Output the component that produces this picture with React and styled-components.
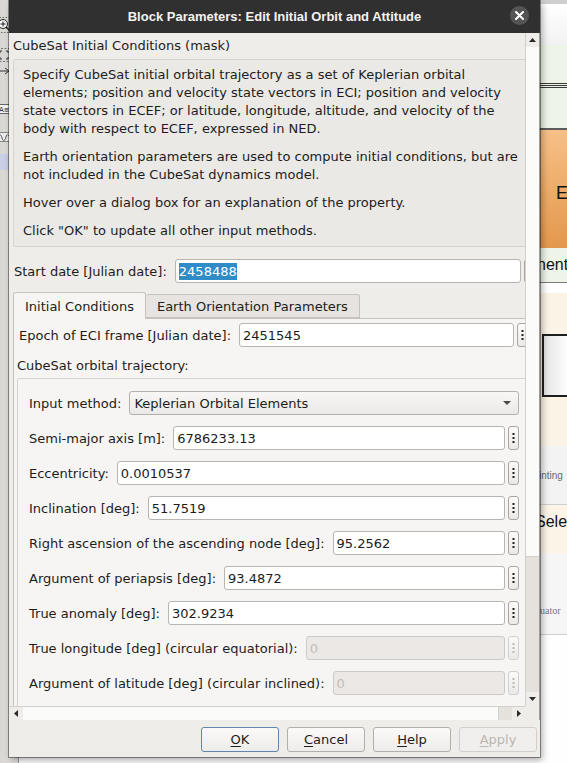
import React from "react";
import styled, { createGlobalStyle } from "styled-components";

const Global = createGlobalStyle`
  html, body { margin: 0; padding: 0; background: #ffffff; }
  body { width: 567px; height: 763px; overflow: hidden; }
  *, *::before, *::after { box-sizing: border-box; }
`;

const Screen = styled.div`
  position: relative;
  width: 567px;
  height: 763px;
  overflow: hidden;
  display: flex;
  font-family: "DejaVu Sans", "Liberation Sans", sans-serif;
  font-size: 13px;
  color: #1c1c1c;
`;

/* ---------- background application window ---------- */
const Toolbar = styled.div`
  flex: none;
  width: 19px;
  background: linear-gradient(90deg, #d9d7d4, #e4e2df);
  border-right: 1px solid #9c9995;
  display: flex;
  flex-direction: column;
  align-items: flex-start;
  padding-top: 17px;
`;

const ToolIcon = styled.div`
  margin-left: -4px;
  margin-top: ${(p) => p.$mt || 0}px;
  width: 16px;
  height: 16px;
  display: flex;
  align-items: center;
  justify-content: center;
  background: ${(p) => (p.$active ? "#c9cfe6" : "transparent")};
`;

const Canvas = styled.div`
  flex: 1;
  display: flex;
  flex-direction: column;
  font-family: "Liberation Sans", Arial, sans-serif;
`;

const Band = styled.div`
  flex: none;
  height: ${(p) => p.$h}px;
  background: ${(p) => p.$bg};
  border-bottom: ${(p) => (p.$line ? `1px solid ${p.$line}` : "none")};
  display: flex;
  align-items: ${(p) => p.$align || "center"};
  padding-left: ${(p) => p.$pl || 0}px;
  padding-top: ${(p) => p.$pt || 0}px;
  padding-bottom: ${(p) => p.$pb || 0}px;
  white-space: nowrap;
`;

const TripleLine = styled.div`
  width: 100%;
  height: 5px;
  margin-top: 38px;
  border-top: 1px solid #3a3a3a;
  border-bottom: 1px solid #3a3a3a;
  background: linear-gradient(#eef4e7 0 1px, #3a3a3a 1px 2px, #eef4e7 2px);
`;

const CanvasText = styled.span`
  font-family: ${(p) => (p.$serif ? '"Liberation Serif", serif' : '"Liberation Sans", Arial, sans-serif')};
  font-size: ${(p) => p.$size}px;
  color: ${(p) => p.$color || "#111"};
`;

const BlockBox = styled.div`
  margin-left: 523px;
  margin-top: 41px;
  width: 60px;
  height: 63px;
  border: 2px solid #1e1e1e;
  background: linear-gradient(90deg, #e4e4e4, #ffffff 45%);
`;

/* ---------- dialog ---------- */
const Dialog = styled.div`
  position: absolute;
  left: 9px;
  top: 0;
  width: 531px;
  height: 757px;
  display: flex;
  flex-direction: column;
  background: #efedea;
  box-shadow: 0 0 0 1px rgba(0, 0, 0, 0.38), 2px 3px 7px rgba(0, 0, 0, 0.35);
`;

const TitleBar = styled.div`
  flex: none;
  height: 33px;
  background: #303030;
  display: grid;
  grid-template-columns: 40px 1fr 40px;
  align-items: center;
`;

const Title = styled.div`
  grid-column: 2;
  text-align: center;
  color: #f3f3f3;
  font-family: "Liberation Sans", Arial, sans-serif;
  font-weight: bold;
  font-size: 13px;
`;

const CloseButton = styled.div`
  grid-column: 3;
  justify-self: end;
  margin-right: 11px;
  margin-top: -2px;
  width: 19px;
  height: 19px;
  border-radius: 50%;
  background: #545454;
  display: flex;
  align-items: center;
  justify-content: center;
`;

const Body = styled.div`
  flex: none;
  display: grid;
  grid-template-columns: 516px 15px;
  grid-template-rows: 673px 14px;
`;

const Viewport = styled.div`
  overflow: hidden;
  background: #efedea;
`;

const Content = styled.div`
  width: 530px;
  padding: 5px 4px 0;
`;

const MaskTitle = styled.div`
  height: 16px;
  line-height: 16px;
`;

const Description = styled.div`
  margin-top: 5px;
  border: 1px solid #d6d2ce;
  border-radius: 2px;
  background: #ebe9e6;
  padding: 6px 7px 6px 9px;
  line-height: 18px;
`;

const Para = styled.p`
  margin: 0;
  & + & { margin-top: 10px; }
`;

const Row = styled.div`
  display: flex;
  align-items: center;
  height: 24px;
  gap: 3px;
  margin-top: ${(p) => p.$mt || 0}px;
  padding-left: ${(p) => p.$pl || 0}px;
  margin-right: ${(p) => p.$mr || 0}px;
`;

const Label = styled.span`
  white-space: nowrap;
  margin-right: 5px;
`;

const Field = styled.div`
  flex: 1;
  height: 24px;
  border: 1px solid ${(p) => (p.$disabled ? "#cdc9c5" : "#b8b4b0")};
  border-radius: 3px;
  background: ${(p) => (p.$disabled ? "#ebe8e5" : "#ffffff")};
  color: ${(p) => (p.$disabled ? "#c2beba" : "#1c1c1c")};
  display: flex;
  align-items: center;
  padding-left: 3px;
  white-space: nowrap;
  overflow: hidden;
`;

const Selected = styled.span`
  background: #308cc6;
  color: #ffffff;
  line-height: 17px;
`;

const MoreButton = styled.div`
  flex: none;
  width: 11px;
  height: 24px;
  border: 1px solid ${(p) => (p.$disabled ? "#d3cfcb" : "#a9a5a1")};
  border-radius: 3px;
  background: linear-gradient(#fbfbfa, #ebe9e7);
  display: flex;
  align-items: center;
  justify-content: center;
`;

const Tabs = styled.div`
  margin-top: 9px;
  display: flex;
  align-items: flex-end;
  height: 26px;
`;

const Tab = styled.div`
  height: ${(p) => (p.$active ? 27 : 24)}px;
  margin-bottom: ${(p) => (p.$active ? -1 : 0)}px;
  padding: 0 11px;
  display: flex;
  align-items: center;
  border: 1px solid #c6c2be;
  border-bottom: ${(p) => (p.$active ? "none" : "1px solid #c6c2be")};
  border-left: ${(p) => (p.$first ? "1px solid #c6c2be" : "none")};
  border-radius: 3px 3px 0 0;
  background: ${(p) => (p.$active ? "#f7f5f3" : "#e6e3e0")};
  position: relative;
  z-index: ${(p) => (p.$active ? 1 : 0)};
  padding-top: ${(p) => (p.$active ? 0 : 1)}px;
`;

const TabPanel = styled.div`
  border: 1px solid #c6c2be;
  background: #f7f5f3;
  padding: 4px 3px 0 3px;
  height: 400px;
`;

const SectionLabel = styled.div`
  margin-top: 11px;
  height: 16px;
  line-height: 16px;
`;

const Group = styled.div`
  margin-top: 4px;
  border: 1px solid #d6d2ce;
  border-radius: 2px;
  background: #f7f5f3;
  padding: 12px 11px 14px;
  display: flex;
  flex-direction: column;
  gap: 11px;
`;

const Combo = styled.div`
  flex: 1;
  height: 24px;
  border: 1px solid #b4b0ac;
  border-radius: 3px;
  background: linear-gradient(#f8f7f6, #ebe9e7);
  display: flex;
  align-items: center;
  justify-content: space-between;
  padding: 0 7px 0 4px;
`;

const VScroll = styled.div`
  border-left: 1px solid #d3cfcb;
  border-right: 1px solid #9f9b97;
  background: #e5e2de;
  display: flex;
  flex-direction: column;
`;

const ArrowCell = styled.div`
  flex: none;
  width: ${(p) => (p.$w ? `${p.$w}px` : "auto")};
  height: ${(p) => (p.$h ? `${p.$h}px` : "auto")};
  display: flex;
  align-items: center;
  justify-content: center;
  background: #efedea;
`;

const Handle = styled.div`
  flex: none;
  ${(p) => (p.$vertical ? `height: ${p.$size}px;` : `width: ${p.$size}px;`)}
  background: #fbfbfa;
  ${(p) => (p.$vertical ? "border-bottom: 1px solid #d3cfcb;" : "border-right: 1px solid #d3cfcb;")}
`;

const Track = styled.div`
  flex: 1;
  background: #e5e2de;
`;

const HScroll = styled.div`
  border-top: 1px solid #d3cfcb;
  background: #e5e2de;
  display: flex;
`;

const Corner = styled.div`
  background: #efedea;
  border-right: 1px solid #9f9b97;
`;

const ButtonBar = styled.div`
  flex: 1;
  display: flex;
  justify-content: flex-end;
  align-items: flex-start;
  gap: 8px;
  padding: 7px 3px 0 0;
`;

const Button = styled.div`
  width: 78px;
  height: 25px;
  border: 1px solid ${(p) => (p.$default ? "#5f86ab" : p.$disabled ? "#d2cecb" : "#b3afab")};
  border-radius: 3px;
  background: ${(p) => (p.$disabled ? "#f1efed" : "linear-gradient(#fbfaf9, #eeecea)")};
  color: ${(p) => (p.$disabled ? "#bab6b2" : "#1c1c1c")};
  display: flex;
  align-items: center;
  justify-content: center;
  u { text-decoration-thickness: 1px; text-underline-offset: 2px; }
`;

const Dots = ({ disabled }) => (
  <svg width="3" height="12" viewBox="0 0 3 12">
    {[1, 5, 9].map((y) => (
      <rect key={y} x="0.5" y={y} width="2" height="2" fill={disabled ? "#bdb9b5" : "#222"} />
    ))}
  </svg>
);

const Tri = ({ dir, color = "#333", w = 7, h = 4 }) => {
  const pts = {
    up: `0,${h} ${w / 2},0 ${w},${h}`,
    down: `0,0 ${w},0 ${w / 2},${h}`,
    left: `${h},0 ${h},${w} 0,${w / 2}`,
    right: `0,0 0,${w} ${h},${w / 2}`,
  }[dir];
  const horiz = dir === "left" || dir === "right";
  return (
    <svg width={horiz ? h : w} height={horiz ? w : h} viewBox={`0 0 ${horiz ? h : w} ${horiz ? w : h}`}>
      <polygon points={pts} fill={color} />
    </svg>
  );
};

const ParamRow = ({ label, value, disabled }) => (
  <Row>
    <Label>{label}</Label>
    <Field $disabled={disabled}>{value}</Field>
    <MoreButton $disabled={disabled}>
      <Dots disabled={disabled} />
    </MoreButton>
  </Row>
);

const params = [
  ["Semi-major axis [m]:", "6786233.13"],
  ["Eccentricity:", "0.0010537"],
  ["Inclination [deg]:", "51.7519"],
  ["Right ascension of the ascending node [deg]:", "95.2562"],
  ["Argument of periapsis [deg]:", "93.4872"],
  ["True anomaly [deg]:", "302.9234"],
  ["True longitude [deg] (circular equatorial):", "0", true],
  ["Argument of latitude [deg] (circular inclined):", "0", true],
];

export default function App() {
  return (
    <Screen>
      <Global />
      <Toolbar>
        <ToolIcon>
          <svg width="16" height="16" viewBox="0 0 16 16">
            <rect x="0.5" y="0.5" width="15" height="15" fill="none" stroke="#666" strokeDasharray="1.5 1.5" />
            <circle cx="7" cy="7" r="4.5" fill="#f5f5f5" stroke="#222" />
            <path d="M4.5 7h5M7 4.5v5" stroke="#222" />
            <path d="M10 10l4 4" stroke="#222" strokeWidth="1.6" />
          </svg>
        </ToolIcon>
        <ToolIcon $mt={14}>
          <svg width="16" height="16" viewBox="0 0 16 16">
            <rect x="1.5" y="1.5" width="13" height="13" fill="none" stroke="#777" strokeDasharray="2 1.5" />
            <path d="M4 6V4h2M12 6V4h-2M4 10v2h2M12 10v2h-2" stroke="#333" fill="none" />
          </svg>
        </ToolIcon>
        <ToolIcon $mt={0}>
          <svg width="16" height="16" viewBox="0 0 16 16">
            <path d="M1 8h11M9 5l4 3-4 3" stroke="#333" fill="none" />
          </svg>
        </ToolIcon>
        <ToolIcon $mt={22}>
          <svg width="16" height="16" viewBox="0 0 16 16">
            <rect x="1.5" y="3.5" width="13" height="9" fill="#f4f4f4" stroke="#666" />
            <text x="3" y="11" fontSize="7" fontFamily="DejaVu Sans" fill="#222">A≡</text>
          </svg>
        </ToolIcon>
        <ToolIcon $mt={12}>
          <svg width="16" height="16" viewBox="0 0 16 16">
            <rect x="1.5" y="3.5" width="13" height="9" fill="#ececec" stroke="#888" />
            <path d="M2 9c2-4 3-4 4 0s3 3 4-1 2-2 4 0" stroke="#555" fill="none" />
          </svg>
        </ToolIcon>
        <ToolIcon $mt={9} $active />
      </Toolbar>

      <Canvas>
        <Band $h={4} $bg="#cfcfcf" />
        <Band $h={41} $bg="linear-gradient(#ffffff, #f2f2f2)" />
        <Band $h={83} $bg="#eef4e7" $align="flex-start">
          <TripleLine />
        </Band>
        <Band $h={2} $bg="#5c5c5c" />
        <Band $h={118} $bg="linear-gradient(170deg, #fdd9b0 10%, #f3b77a 55%, #e19548)" $pl={537} $pt={8}>
          <CanvasText $size={18}>E</CanvasText>
        </Band>
        <Band $h={35} $bg="#eef5e8" $line="#7c7c7c" $pl={518}>
          <CanvasText $size={16}>nent</CanvasText>
        </Band>
        <Band $h={10} $bg="#ffffff" />
        <Band $h={153} $bg="#fbf4e6" $align="flex-start">
          <BlockBox />
        </Band>
        <Band $h={59} $bg="#f3f3f3" $line="#cfcfcf" $pl={520}>
          <CanvasText $size={10} $color="#6a6a6a">inting</CanvasText>
        </Band>
        <Band $h={48} $bg="#fcf5e7" $pl={516} $align="flex-start" $pt={8}>
          <CanvasText $size={16}>Sele</CanvasText>
        </Band>
        <Band $h={82} $bg="#f6f6f6" $line="#cfcfcf" $pl={521} $align="flex-end" $pb={18}>
          <CanvasText $size={10} $serif $color="#777">uator</CanvasText>
        </Band>
        <Band $h={140} $bg="#fefefe" />
      </Canvas>

      <Dialog>
        <TitleBar>
          <Title>Block Parameters: Edit Initial Orbit and Attitude</Title>
          <CloseButton>
            <svg width="9" height="9" viewBox="0 0 9 9">
              <path d="M1 1l7 7M8 1l-7 7" stroke="#ffffff" strokeWidth="2" strokeLinecap="round" />
            </svg>
          </CloseButton>
        </TitleBar>

        <Body>
          <Viewport>
            <Content>
              <MaskTitle>CubeSat Initial Conditions (mask)</MaskTitle>
              <Description>
                <Para>
                  Specify CubeSat initial orbital trajectory as a set of Keplerian orbital elements; position and
                  velocity state vectors in ECI; position and velocity state vectors in ECEF; or latitude,
                  longitude, altitude, and velocity of the body with respect to ECEF, expressed in NED.
                </Para>
                <Para>
                  Earth orientation parameters are used to compute initial conditions, but are not included in
                  the CubeSat dynamics model.
                </Para>
                <Para>Hover over a dialog box for an explanation of the property.</Para>
                <Para>Click "OK" to update all other input methods.</Para>
              </Description>

              <Row $mt={12} $pl={1}>
                <Label>Start date [Julian date]:</Label>
                <Field>
                  <Selected>2458488</Selected>
                </Field>
                <MoreButton>
                  <Dots />
                </MoreButton>
              </Row>

              <Tabs>
                <Tab $active $first>Initial Conditions</Tab>
                <Tab>Earth Orientation Parameters</Tab>
              </Tabs>
              <TabPanel>
                <Row $pl={2} $mr={3}>
                  <Label>Epoch of ECI frame [Julian date]:</Label>
                  <Field>2451545</Field>
                  <MoreButton>
                    <Dots />
                  </MoreButton>
                </Row>
                <SectionLabel>CubeSat orbital trajectory:</SectionLabel>
                <Group>
                  <Row>
                    <Label>Input method:</Label>
                    <Combo>
                      <span>Keplerian Orbital Elements</span>
                      <Tri dir="down" color="#4a4a4a" w={8} h={4} />
                    </Combo>
                  </Row>
                  {params.map(([l, v, d]) => (
                    <ParamRow key={l} label={l} value={v} disabled={d} />
                  ))}
                </Group>
              </TabPanel>
            </Content>
          </Viewport>

          <VScroll>
            <ArrowCell $h={14}>
              <Tri dir="up" color="#2a2a2a" />
            </ArrowCell>
            <Handle $vertical $size={510} />
            <Track />
            <ArrowCell $h={14}>
              <Tri dir="down" color="#2a2a2a" />
            </ArrowCell>
          </VScroll>

          <HScroll>
            <ArrowCell $w={14}>
              <Tri dir="left" color="#2a2a2a" />
            </ArrowCell>
            <Handle $size={476} />
            <Track />
            <ArrowCell $w={13}>
              <Tri dir="right" color="#2a2a2a" />
            </ArrowCell>
          </HScroll>
          <Corner />
        </Body>

        <ButtonBar>
          <Button $default>
            <span><u>O</u>K</span>
          </Button>
          <Button>
            <span><u>C</u>ancel</span>
          </Button>
          <Button>
            <span><u>H</u>elp</span>
          </Button>
          <Button $disabled>
            <span><u>A</u>pply</span>
          </Button>
        </ButtonBar>
      </Dialog>
    </Screen>
  );
}
